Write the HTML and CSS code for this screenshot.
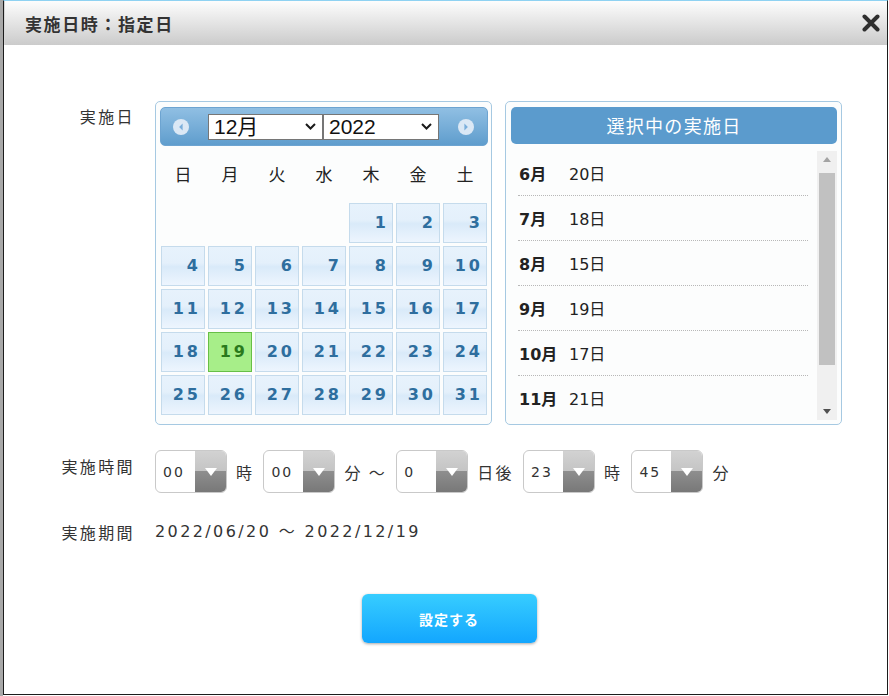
FILE: index.html
```html
<!DOCTYPE html>
<html lang="ja">
<head>
<meta charset="utf-8">
<title>実施日時：指定日</title>
<link rel="stylesheet" href="styles.css">
</head>
<body>
<div class="dialog">
  <div class="titlebar">
    <h1 class="title">実施日時：指定日</h1>
    <svg class="close" width="18" height="18" viewBox="0 0 18 18"><path d="M2.5 2.5L15.5 15.5M15.5 2.5L2.5 15.5" stroke="#2f2f2f" stroke-width="4" stroke-linecap="round"/></svg>
  </div>
  <div class="content">
    <div class="form">
      <div class="label">実施日</div>
      <div class="dates">
        <div class="calendar">
          <div class="cal-head">
            <svg class="nav" width="16" height="16" viewBox="0 0 16 16"><circle cx="8" cy="8" r="8" fill="#dbe8f5"/><path d="M9.6 4.6L6.1 8l3.5 3.4z" fill="#7aaedb"/></svg>
            <div class="selects">
              <div class="sel sel-month"><span>12月</span><svg width="11" height="7" viewBox="0 0 11 7"><path d="M1 1l4.5 4.5L10 1" fill="none" stroke="#1a1a1a" stroke-width="2"/></svg></div>
              <div class="sel sel-year"><span>2022</span><svg width="11" height="7" viewBox="0 0 11 7"><path d="M1 1l4.5 4.5L10 1" fill="none" stroke="#1a1a1a" stroke-width="2"/></svg></div>
            </div>
            <svg class="nav" width="16" height="16" viewBox="0 0 16 16"><circle cx="8" cy="8" r="8" fill="#dbe8f5"/><path d="M6.4 4.6L9.9 8l-3.5 3.4z" fill="#7aaedb"/></svg>
          </div>
          <div class="weekdays">
            <span>日</span><span>月</span><span>火</span><span>水</span><span>木</span><span>金</span><span>土</span>
          </div>
          <div class="days">
            <span class="empty"></span><span class="empty"></span><span class="empty"></span><span class="empty"></span>
            <span class="day">1</span><span class="day">2</span><span class="day">3</span>
            <span class="day">4</span><span class="day">5</span><span class="day">6</span><span class="day">7</span><span class="day">8</span><span class="day">9</span><span class="day">10</span>
            <span class="day">11</span><span class="day">12</span><span class="day">13</span><span class="day">14</span><span class="day">15</span><span class="day">16</span><span class="day">17</span>
            <span class="day">18</span><span class="day selected">19</span><span class="day">20</span><span class="day">21</span><span class="day">22</span><span class="day">23</span><span class="day">24</span>
            <span class="day">25</span><span class="day">26</span><span class="day">27</span><span class="day">28</span><span class="day">29</span><span class="day">30</span><span class="day">31</span>
          </div>
        </div>
        <div class="picked">
          <div class="picked-head">選択中の実施日</div>
          <div class="picked-body">
            <ul class="list">
              <li><b class="m">6月</b><span class="d">20日</span></li>
              <li><b class="m">7月</b><span class="d">18日</span></li>
              <li><b class="m">8月</b><span class="d">15日</span></li>
              <li><b class="m">9月</b><span class="d">19日</span></li>
              <li><b class="m">10月</b><span class="d">17日</span></li>
              <li><b class="m">11月</b><span class="d">21日</span></li>
            </ul>
            <div class="scrollbar">
              <div class="arrow"><i class="tri-up"></i></div>
              <div class="thumb"></div>
              <div class="spacer"></div>
              <div class="arrow"><i class="tri-down"></i></div>
            </div>
          </div>
        </div>
      </div>

      <div class="label row2">実施時間</div>
      <div class="times row2">
        <div class="tsel"><span class="v">00</span><span class="b"><i></i></span></div>
        <span class="unit">時</span>
        <div class="tsel"><span class="v">00</span><span class="b"><i></i></span></div>
        <span class="unit">分 ～</span>
        <div class="tsel"><span class="v">0</span><span class="b"><i></i></span></div>
        <span class="unit">日後</span>
        <div class="tsel"><span class="v">23</span><span class="b"><i></i></span></div>
        <span class="unit">時</span>
        <div class="tsel"><span class="v">45</span><span class="b"><i></i></span></div>
        <span class="unit">分</span>
      </div>

      <div class="label row3">実施期間</div>
      <div class="period row3">2022/06/20 ～ 2022/12/19</div>
    </div>
    <div class="actions">
      <button class="submit" type="button">設定する</button>
    </div>
  </div>
</div>
</body>
</html>
```

FILE: styles.css
```css
* { box-sizing: border-box; }
html, body { margin: 0; }
body {
  background: linear-gradient(to right, #a8a8a8 0, #a8a8a8 3px, #fff 3px);
  font-family: "DejaVu Sans", "Noto Sans CJK JP", sans-serif;
  font-size: 16px;
  color: #333;
  min-height: 696px;
}
.dialog {
  margin-left: 3px;
  width: 885px;
  height: 695px;
  border: 1px solid #1c1c1c;
  border-top-color: #8fd2f2;
  background: #fff;
  display: flex;
  flex-direction: column;
}
.titlebar {
  flex: none;
  height: 44px;
  display: flex;
  align-items: center;
  justify-content: space-between;
  padding: 0 7px 0 20px;
  background: linear-gradient(#fdfdfd, #cbcbcb);
  border-left: 1px solid #d6d6d6;
}
.title {
  margin: 0;
  font-family: "Noto Sans CJK JP", sans-serif;
  font-size: 17px;
  font-weight: bold;
  letter-spacing: 1.6px;
  color: #333;
}
.close { display: block; }

.content { padding-top: 56px; }
.form {
  display: grid;
  grid-template-columns: 131px 1fr;
  column-gap: 20px;
  align-items: start;
}
.label {
  text-align: right;
  letter-spacing: 2.4px;
  line-height: 24px;
  padding-top: 3px;
  font-family: "Noto Sans CJK JP", sans-serif;
}
.row2 { margin-top: 25px; }
.row3 { margin-top: 27px; }
.label.row2 { padding-top: 4px; }
.label.row3 { padding-top: 0; }

/* calendar */
.dates { display: flex; gap: 13px; }
.calendar, .picked {
  width: 337px;
  height: 324px;
  border: 1px solid #a6c9e2;
  border-radius: 5px;
  background: #fcfdfd;
}
.calendar { padding: 5px 3px 10px 4px; }
.cal-head {
  height: 39px;
  border: 1px solid #6da4d1;
  border-radius: 5px;
  background: linear-gradient(#90bfe3, #5f9dcd);
  display: flex;
  align-items: center;
  justify-content: space-between;
  padding: 0 13px 0 12px;
}
.nav { display: block; }
.selects { display: flex; }
.sel {
  height: 26px;
  border: 1px solid #767676;
  background: #fff;
  display: flex;
  align-items: center;
  justify-content: space-between;
  padding: 0 6px 0 5px;
  font-family: "Liberation Sans", "Noto Sans CJK JP", sans-serif;
  font-size: 21px;
  line-height: 24px;
  color: #111;
}
.sel-month { width: 115px; }
.sel-year { width: 116px; }
.weekdays {
  height: 54px;
  margin: 0 1px;
  display: grid;
  grid-template-columns: repeat(7, 1fr);
  column-gap: 3px;
  align-items: center;
  text-align: center;
  font-family: "Noto Sans CJK JP", sans-serif;
  font-size: 17px;
  color: #222;
}
.days {
  margin: 3px 1px 0;
  display: grid;
  grid-template-columns: repeat(7, 1fr);
  grid-auto-rows: 40px;
  gap: 3px;
}
.day {
  border: 1px solid #c5dbec;
  background: linear-gradient(#e7f2fc 0%, #e4f0fb 42%, #d9eaf9 52%, #edf5fe 100%);
  color: #2e6e9e;
  font-weight: bold;
  font-size: 16px;
  letter-spacing: 3px;
  line-height: 38px;
  text-align: right;
  padding-right: 3px;
}
.day.selected {
  background: #a7ee89;
  border-color: #67bf47;
  color: #2a7a1c;
}

/* selected dates panel */
.picked {
  padding: 5px 4px 4px 5px;
  display: flex;
  flex-direction: column;
}
.picked-head {
  flex: none;
  height: 37px;
  border-radius: 5px;
  background: #5b9bcd;
  color: #fff;
  font-family: "Noto Sans CJK JP", sans-serif;
  font-size: 18px;
  letter-spacing: 1.3px;
  line-height: 37px;
  text-align: center;
}
.picked-body {
  flex: 1;
  margin-top: 7px;
  display: flex;
  min-height: 0;
}
.list {
  flex: 1;
  margin: 0;
  padding: 0;
  list-style: none;
  overflow: hidden;
}
.list li {
  height: 45px;
  margin: 0 9px 0 7px;
  padding-left: 1px;
  border-bottom: 1px dotted #b8b8b8;
  display: flex;
  align-items: center;
  color: #222;
}
.list .m { width: 50px; font-weight: bold; }
.scrollbar {
  width: 20px;
  background: #f0f0f0;
  display: flex;
  flex-direction: column;
}
.arrow {
  height: 17px;
  display: flex;
  align-items: center;
  justify-content: center;
}
.tri-up { border: 4.5px solid transparent; border-top: 0; border-bottom: 5px solid #a3a3a3; }
.tri-down { border: 4.5px solid transparent; border-bottom: 0; border-top: 5px solid #505050; }
.thumb { height: 192px; margin: 5px 2px 0; background: #c1c1c1; }
.spacer { flex: 1; }

/* time selects */
.times {
  display: flex;
  align-items: center;
  gap: 9px;
  height: 43px;
}
.tsel {
  width: 72px;
  height: 43px;
  border: 1px solid #c9c9c9;
  border-radius: 6px;
  background: #fff;
  display: flex;
  align-items: stretch;
}
.tsel .v {
  flex: 1;
  display: flex;
  align-items: center;
  padding-left: 7px;
  font-size: 14px;
  letter-spacing: 2px;
  color: #333;
}
.tsel .b {
  width: 31px;
  border-radius: 0 5px 5px 0;
  background: linear-gradient(#d2d2d2 0%, #c4c4c4 50%, #8e8e8e 50%, #787878 100%);
  display: flex;
  align-items: center;
  justify-content: center;
}
.tsel .b i {
  border-left: 6px solid transparent;
  border-right: 6px solid transparent;
  border-top: 8px solid #fff;
}
.unit {
  letter-spacing: 2.4px;
  font-family: "Noto Sans CJK JP", sans-serif;
}
.period {
  letter-spacing: 2.4px;
  line-height: 24px;
}

/* action */
.actions {
  margin-top: 50px;
  padding-left: 7px;
  display: flex;
  justify-content: center;
}
.submit {
  width: 175px;
  height: 49px;
  border: 0;
  border-radius: 6px;
  background: linear-gradient(#37cdff, #13a6fe);
  box-shadow: 0 1px 3px rgba(0, 0, 0, 0.35);
  color: #fff;
  font-family: "Noto Sans CJK JP", sans-serif;
  font-size: 14px;
  font-weight: bold;
  letter-spacing: 1px;
}
```
